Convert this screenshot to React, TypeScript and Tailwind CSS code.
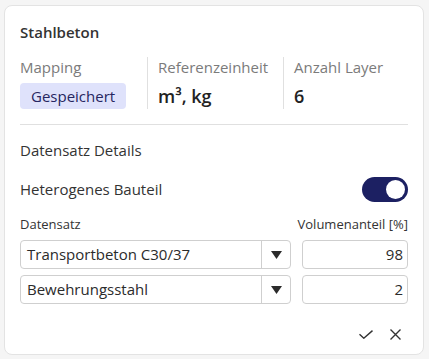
import { useState } from 'react'

function Stat({ label, children, className }: { label: string; children: React.ReactNode; className: string }) {
  return (
    <div className={`flex flex-col gap-[6px] ${className}`}>
      <span className="text-[15px] leading-[20px] text-[#7b7b7b]">{label}</span>
      <div className="h-[26px] flex items-center">{children}</div>
    </div>
  )
}

function Row({ name, share }: { name: string; share: string }) {
  return (
    <div className="flex gap-[11px]">
      <div className="flex h-[29px] w-[271px] border border-[#cfcfcf] rounded-[4px] bg-white">
        <div className="flex-1 flex items-center pl-[6px] text-[15px] text-[#2b2b2b] border-r border-[#cfcfcf]">
          {name}
        </div>
        <div className="w-[28px] flex items-center justify-center">
          <svg width="11" height="8" viewBox="0 0 11 8">
            <path d="M0 0h11L5.5 8z" fill="#2b2b2b" />
          </svg>
        </div>
      </div>
      <div className="flex h-[29px] w-[106px] items-center justify-end border border-[#cfcfcf] rounded-[4px] bg-white pr-[4px] text-[15px] text-[#2b2b2b]">
        {share}
      </div>
    </div>
  )
}

export default function App() {
  const [on, setOn] = useState(true)

  return (
    <div className="w-[429px] h-[359px] bg-[#f5f5f5] pt-[5px] pl-[4px] pr-[5px] pb-[4px]" style={{ fontFamily: '"Open Sans", "Noto Sans", sans-serif' }}>
      <div className="h-[350px] bg-white border border-[#e3e3e3] rounded-[8px] px-[15px] pt-[15px]">
        <h2 className="text-[15px] leading-[22px] font-semibold text-[#333]">Stahlbeton</h2>

        <div className="flex mt-[14px]">
          <Stat label="Mapping" className="w-[127px] shrink-0">
            <span className="h-[26px] px-[11px] flex items-center rounded-[4px] bg-[#dfe2fb] text-[15px] text-[#262660]">
              Gespeichert
            </span>
          </Stat>
          <Stat label="Referenzeinheit" className="w-[136px] shrink-0 border-l border-[#e0e0e0] pl-[10px]">
            <span className="text-[18px] font-semibold text-[#222]">m³, kg</span>
          </Stat>
          <Stat label="Anzahl Layer" className="flex-1 border-l border-[#e0e0e0] pl-[10px]">
            <span className="text-[18px] font-semibold text-[#222]">6</span>
          </Stat>
        </div>

        <div className="h-px bg-[#e0e0e0] mt-[15px]" />

        <div className="mt-[14px] text-[15px] leading-[22px] text-[#333]">Datensatz Details</div>

        <div className="flex items-center justify-between mt-[16px] h-[25px]">
          <span className="text-[15px] text-[#333]">Heterogenes Bauteil</span>
          <button
            onClick={() => setOn(!on)}
            className={`w-[46px] h-[25px] rounded-full flex items-center px-[3px] ${on ? 'bg-[#1c2062] justify-end' : 'bg-[#ccc] justify-start'}`}
          >
            <span className="w-[19px] h-[19px] rounded-full bg-white" />
          </button>
        </div>

        <div className="flex justify-between mt-[13px] text-[13px] leading-[18px] text-[#333]">
          <span>Datensatz</span>
          <span>Volumenanteil [%]</span>
        </div>

        <div className="flex flex-col gap-[6px] mt-[7px]">
          <Row name="Transportbeton C30/37" share="98" />
          <Row name="Bewehrungsstahl" share="2" />
        </div>

        <div className="flex justify-end items-center gap-[17px] mt-[25px] pr-[7px]">
          <svg width="14" height="9" viewBox="0 0 14 9" fill="none" stroke="#333" strokeWidth="1.4">
            <path d="M0.5 4.2L4.8 8.2L13.5 0.6" />
          </svg>
          <svg width="11" height="11" viewBox="0 0 11 11" fill="none" stroke="#333" strokeWidth="1.4">
            <path d="M0.5 0.5L10.5 10.5M10.5 0.5L0.5 10.5" />
          </svg>
        </div>
      </div>
    </div>
  )
}
